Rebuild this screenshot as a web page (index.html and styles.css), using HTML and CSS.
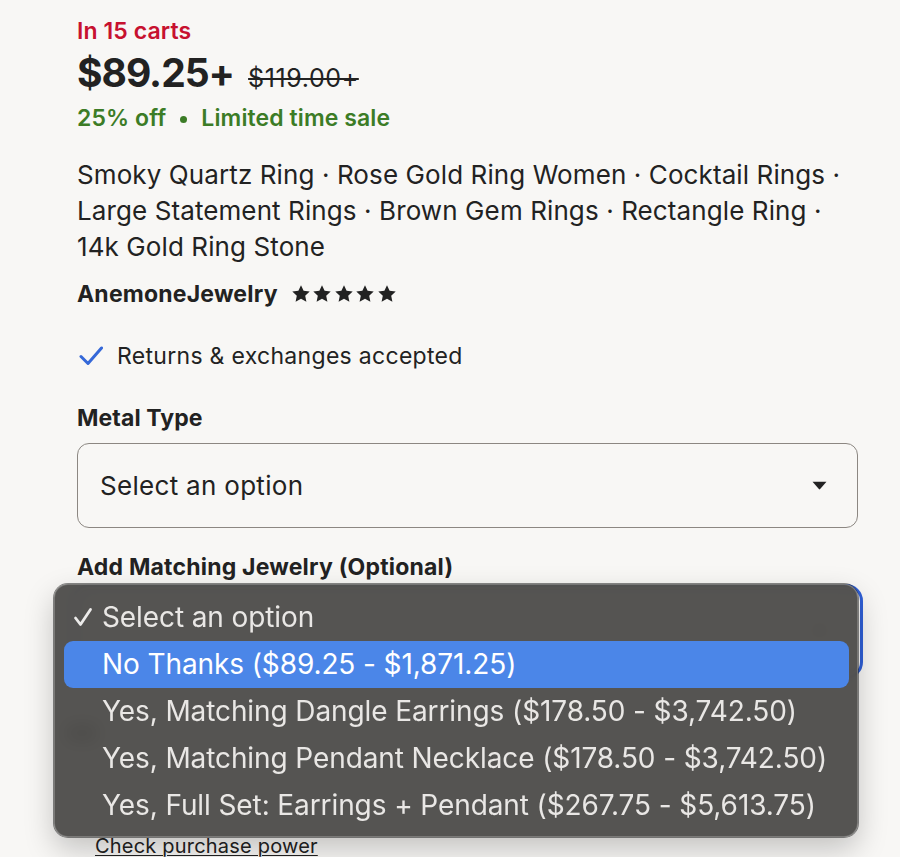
FILE: index.html
```html
<!DOCTYPE html>
<html lang="en">
<head>
<meta charset="utf-8">
<title>Listing</title>
<link rel="stylesheet" href="styles.css">
</head>
<body>
<div class="page">
  <div class="carts">In 15 carts</div>
  <div class="price-row">
    <span class="price">$89.25+</span>
    <span class="was">$119.00+</span>
  </div>
  <div class="sale">25% off <span class="dot"></span> Limited time sale</div>
  <h1 class="title">Smoky Quartz Ring · Rose Gold Ring Women · Cocktail Rings · Large Statement Rings · Brown Gem Rings · Rectangle Ring · 14k Gold Ring Stone</h1>
  <div class="shop">
    <span class="shop-name">AnemoneJewelry</span>
    <span class="stars">
      <svg viewBox="0 0 20 20"><path d="M10 1.2l2.6 5.6 6.1.7-4.5 4.2 1.2 6-5.4-3-5.4 3 1.2-6L1.3 7.5l6.1-.7z"/></svg>
      <svg viewBox="0 0 20 20"><path d="M10 1.2l2.6 5.6 6.1.7-4.5 4.2 1.2 6-5.4-3-5.4 3 1.2-6L1.3 7.5l6.1-.7z"/></svg>
      <svg viewBox="0 0 20 20"><path d="M10 1.2l2.6 5.6 6.1.7-4.5 4.2 1.2 6-5.4-3-5.4 3 1.2-6L1.3 7.5l6.1-.7z"/></svg>
      <svg viewBox="0 0 20 20"><path d="M10 1.2l2.6 5.6 6.1.7-4.5 4.2 1.2 6-5.4-3-5.4 3 1.2-6L1.3 7.5l6.1-.7z"/></svg>
      <svg viewBox="0 0 20 20"><path d="M10 1.2l2.6 5.6 6.1.7-4.5 4.2 1.2 6-5.4-3-5.4 3 1.2-6L1.3 7.5l6.1-.7z"/></svg>
    </span>
  </div>
  <div class="returns">
    <svg class="check" viewBox="0 0 24 20"><path d="M2 10.5l7 7L22.5 2"/></svg>
    <span>Returns &amp; exchanges accepted</span>
  </div>
  <div class="label">Metal Type</div>
  <div class="select">
    <span>Select an option</span>
    <svg class="caret" viewBox="0 0 14 8"><path d="M0.5 0.5h13L7.6 7.3a0.8 0.8 0 0 1-1.2 0z"/></svg>
  </div>
  <div class="label label-2">Add Matching Jewelry (Optional)</div>
  <div class="select select-focus">
    <svg class="caret" viewBox="0 0 14 8"><path d="M0.5 0.5h13L7.6 7.3a0.8 0.8 0 0 1-1.2 0z"/></svg>
  </div>
  <div class="installments">
    <span class="pay-icon"></span>
  </div>
  <a class="check-link" href="#">Check purchase power</a>

  <div class="menu">
    <div class="item">
      <svg class="tick" viewBox="0 0 20 20"><path d="M2.5 11l5 6.5L17.5 2.5"/></svg>
      <span>Select an option</span>
    </div>
    <div class="item active"><span>No Thanks ($89.25 - $1,871.25)</span></div>
    <div class="item"><span>Yes, Matching Dangle Earrings ($178.50 - $3,742.50)</span></div>
    <div class="item"><span>Yes, Matching Pendant Necklace ($178.50 - $3,742.50)</span></div>
    <div class="item"><span>Yes, Full Set: Earrings + Pendant ($267.75 - $5,613.75)</span></div>
  </div>
</div>
</body>
</html>
```

FILE: styles.css
```css
* { box-sizing: border-box; }
html, body {
  margin: 0;
  padding: 0;
  background: #f8f7f5;
  height: 100%;
  overflow: hidden;
}
body {
  font-family: Inter, "Liberation Sans", sans-serif;
  color: #222222;
}
.page {
  position: relative;
  padding: 17px 42px 0 77px;
  height: 857px;
}
.carts {
  font-size: 23px;
  line-height: 28px;
  font-weight: 600;
  color: #c7112f;
  letter-spacing: 0.1px;
}
.price-row {
  margin-top: 4px;
  display: flex;
  align-items: baseline;
  gap: 14px;
  line-height: 48px;
}
.price {
  font-size: 39px;
  font-weight: 700;
  letter-spacing: -1px;
}
.was {
  font-size: 25px;
  text-decoration: line-through;
  letter-spacing: 0.6px;
  color: #222;
}
.sale {
  margin-top: 2px;
  font-size: 23px;
  line-height: 28px;
  font-weight: 600;
  color: #3c7c26;
  display: flex;
  align-items: center;
  letter-spacing: 0.1px;
}
.dot {
  display: inline-block;
  width: 7px;
  height: 7px;
  border-radius: 50%;
  background: #3c7c26;
  margin: 2px 14px 0 14px;
}
.title {
  margin: 25px 0 0;
  font-size: 26px;
  line-height: 36px;
  font-weight: 400;
  letter-spacing: 0.1px;
}
.shop {
  margin-top: 15px;
  display: flex;
  align-items: center;
  gap: 13px;
  line-height: 28px;
}
.shop-name {
  font-size: 23px;
  font-weight: 700;
  letter-spacing: 0.2px;
}
.stars {
  display: flex;
  gap: 1.5px;
}
.stars svg {
  width: 20px;
  height: 20px;
  fill: #222;
}
.returns {
  margin-top: 34px;
  display: flex;
  align-items: center;
  gap: 14px;
  font-size: 23px;
  line-height: 28px;
  letter-spacing: 0.3px;
}
.check {
  width: 24px;
  height: 20px;
  margin-left: 2px;
  fill: none;
  stroke: #3568d8;
  stroke-width: 3;
  stroke-linecap: round;
  stroke-linejoin: round;
}
.label {
  margin-top: 34px;
  font-size: 23px;
  line-height: 28px;
  font-weight: 700;
  letter-spacing: 0.1px;
}
.label-2 {
  margin-top: 25px;
  letter-spacing: 0.2px;
}
.select {
  margin-top: 11px;
  height: 85px;
  border: 1.5px solid #8c8782;
  border-radius: 12px;
  display: flex;
  align-items: center;
  justify-content: space-between;
  padding: 0 30px 0 22px;
  font-size: 26px;
  letter-spacing: 0.3px;
  background: #f8f7f5;
}
.caret {
  width: 15px;
  height: 9px;
  fill: #222;
}
.select-focus {
  margin-top: 8px;
  justify-content: flex-end;
  outline: 3px solid #2f5fd6;
  outline-offset: 2px;
}
.installments {
  margin-top: 44px;
  display: flex;
  align-items: center;
  height: 30px;
}
.pay-icon {
  width: 30px;
  height: 18px;
  border-radius: 4px;
  background: #333;
  margin-left: -10px;
}
.check-link {
  display: inline-block;
  margin: 86px 0 0 18px;
  font-size: 20px;
  line-height: 24px;
  color: #222;
  text-decoration: underline;
  text-underline-offset: 2px;
  text-decoration-thickness: 1px;
  letter-spacing: 0.2px;
}
.menu {
  position: absolute;
  left: 54px;
  top: 584px;
  width: 804px;
  height: 253px;
  padding: 10px 9px 9px 10px;
  background: rgba(80, 78, 76, 0.97);
  backdrop-filter: blur(8px);
  border-radius: 14px;
  box-shadow: 0 0 0 1px rgba(40, 40, 40, 0.55), inset 0 0 0 1px rgba(255, 255, 255, 0.22), 0 12px 30px rgba(0, 0, 0, 0.22);
  display: flex;
  flex-direction: column;
}
.item {
  position: relative;
  height: 47px;
  display: flex;
  align-items: center;
  padding-left: 38px;
  font-size: 28px;
  color: #e9e7e5;
  letter-spacing: -0.1px;
  border-radius: 9px;
}
.item.active {
  background: #4b86e8;
  color: #ffffff;
}
.tick {
  position: absolute;
  left: 9px;
  top: 13px;
  width: 20px;
  height: 20px;
  fill: none;
  stroke: #ecebea;
  stroke-width: 2.8;
  stroke-linecap: round;
  stroke-linejoin: round;
}
```
